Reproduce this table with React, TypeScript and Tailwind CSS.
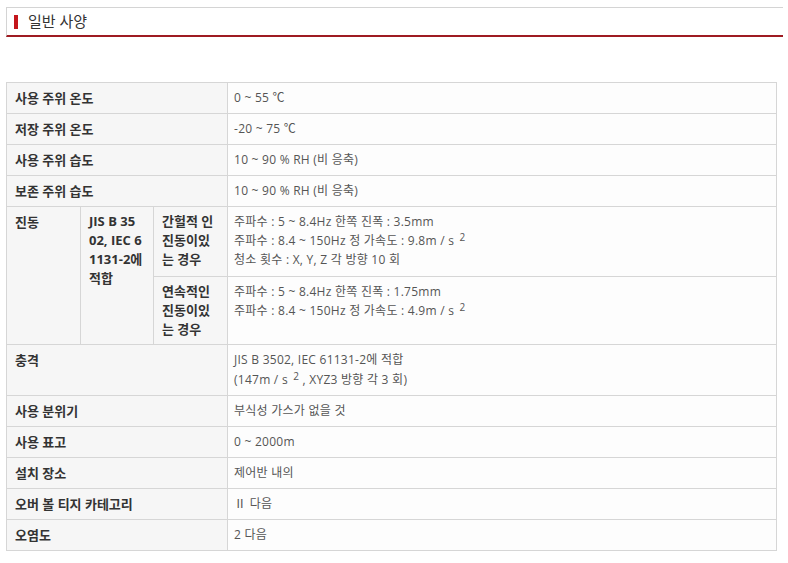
const font = { fontFamily: '"Open Sans", "Noto Sans CJK KR", sans-serif' }

const Sup = () => <sup className="text-[10px] relative -top-[4px] ml-[2px]">2</sup>

type Row = { label: string; value: React.ReactNode; h?: string }

const rowsBefore: Row[] = [
  { label: '사용 주위 온도', value: '0 ~ 55 ℃' },
  { label: '저장 주위 온도', value: '-20 ~ 75 ℃' },
  { label: '사용 주위 습도', value: '10 ~ 90 % RH (비 응축)' },
  { label: '보존 주위 습도', value: '10 ~ 90 % RH (비 응축)' }
]

const rowsAfter: Row[] = [
  {
    label: '충격',
    value: (
      <>
        JIS B 3502, IEC 61131-2에 적합
        <br />
        (147m / s <Sup /> , XYZ3 방향 각 3 회)
      </>
    ),
    h: 'h-[51px]'
  },
  { label: '사용 분위기', value: '부식성 가스가 없을 것' },
  { label: '사용 표고', value: '0 ~ 2000m' },
  { label: '설치 장소', value: '제어반 내의' },
  { label: '오버 볼 티지 카테고리', value: 'Ⅱ 다음' },
  { label: '오염도', value: '2 다음' }
]

const td = 'border border-[#d6d6d6] align-top py-[5px] leading-[20px]'
const th = `${td} pl-2 pr-1 bg-[#f6f6f6] font-bold text-[13px] text-[#333] text-left`
const tv = `${td} pl-[6px] pr-2 bg-[#fdfdfd] text-[#555] tracking-[0.25px]`

const SimpleRow = ({ r }: { r: Row }) => (
  <tr className={r.h ?? 'h-[31px]'}>
    <td colSpan={3} className={th}>{r.label}</td>
    <td className={tv}>{r.value}</td>
  </tr>
)

export default function App () {
  return (
    <div className="w-[788px] h-[563px] bg-white text-[12px]" style={font}>
      <div className="pt-[7px] pl-[6px] pr-[5px]">
        <div className="flex items-center h-[30px] border-t border-l border-[#d4d4d4] border-b-2 border-b-[#9e1b22]">
          <span className="w-[4px] h-[14px] bg-[#c4161c] ml-[7px] mr-[10px]" />
          <h2 className="text-[15px] text-[#333] leading-none">일반 사양</h2>
        </div>
      </div>

      <div className="pt-[45px] pl-[6px]">
        <table className="w-[771px] border-collapse table-fixed">
          <colgroup>
            <col className="w-[74px]" />
            <col className="w-[73px]" />
            <col className="w-[74px]" />
            <col />
          </colgroup>
          <tbody>
            {rowsBefore.map((r) => <SimpleRow key={r.label} r={r} />)}
            <tr className="h-[70px]">
              <td rowSpan={2} className={th}>진동</td>
              <td rowSpan={2} className={`${th} !leading-[19px]`}>
                JIS B 35<br />02, IEC 6<br />1131-2에<br />적합
              </td>
              <td className={`${th} !leading-[19px]`}>
                간헐적 인<br />진동이있<br />는 경우
              </td>
              <td className={`${tv} !leading-[19px]`}>
                주파수 : 5 ~ 8.4Hz 한쪽 진폭 : 3.5mm<br />
                주파수 : 8.4 ~ 150Hz 정 가속도 : 9.8m / s <Sup /><br />
                청소 횟수 : X, Y, Z 각 방향 10 회
              </td>
            </tr>
            <tr className="h-[68px]">
              <td className={`${th} !leading-[19px]`}>
                연속적인<br />진동이있<br />는 경우
              </td>
              <td className={`${tv} !leading-[19px]`}>
                주파수 : 5 ~ 8.4Hz 한쪽 진폭 : 1.75mm<br />
                주파수 : 8.4 ~ 150Hz 정 가속도 : 4.9m / s <Sup />
              </td>
            </tr>
            {rowsAfter.map((r) => <SimpleRow key={r.label} r={r} />)}
          </tbody>
        </table>
      </div>
    </div>
  )
}
